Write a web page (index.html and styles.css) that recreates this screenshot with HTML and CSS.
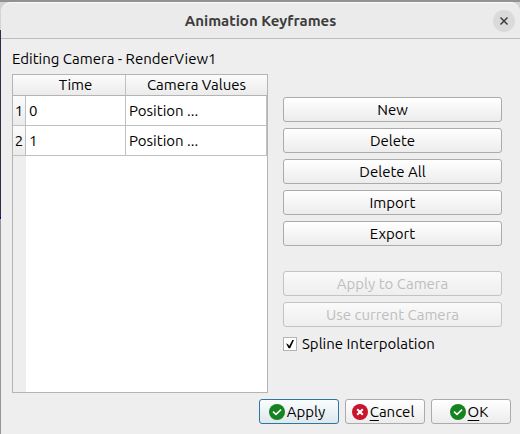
FILE: index.html
```html
<!DOCTYPE html>
<html lang="en">
<head>
<meta charset="utf-8">
<title>Animation Keyframes</title>
<link rel="stylesheet" href="styles.css">
</head>
<body>
<main class="dialog">
  <header class="titlebar">
    <h1>Animation Keyframes</h1>
    <button class="close" type="button" aria-label="Close">
      <svg width="22" height="22" viewBox="0 0 22 22"><path d="M7.5 7.5l7 7M14.5 7.5l-7 7" stroke="#3d3d3d" stroke-width="1.5" fill="none"/></svg>
    </button>
  </header>
  <div class="content">
    <p class="caption">Editing Camera - RenderView1</p>
    <div class="editor">
      <div class="tableview">
        <table>
          <colgroup><col class="col-index"><col class="col-time"><col></colgroup>
          <thead><tr><td></td><th scope="col">Time</th><th scope="col">Camera Values</th></tr></thead>
          <tbody>
            <tr><th scope="row">1</th><td>0</td><td>Position ...</td></tr>
            <tr><th scope="row">2</th><td>1</td><td>Position ...</td></tr>
          </tbody>
        </table>
      </div>
      <div class="side">
        <button class="btn" type="button">New</button>
        <button class="btn" type="button">Delete</button>
        <button class="btn" type="button">Delete All</button>
        <button class="btn" type="button">Import</button>
        <button class="btn" type="button">Export</button>
        <button class="btn camera" type="button" disabled>Apply to Camera</button>
        <button class="btn" type="button" disabled>Use current Camera</button>
        <label class="check"><input type="checkbox" checked><span>Spline Interpolation</span>
          <svg class="tick" width="14" height="14" viewBox="0 0 14 14"><path d="M3 6.2L5.3 7.4 6.2 9 9.4 3H11L7.2 11.2H5.6Z" fill="#000"/></svg>
        </label>
      </div>
    </div>
    <footer class="actions">
      <button class="btn primary" type="button"><svg width="16" height="16" viewBox="0 0 16 16"><circle cx="8" cy="8" r="8" fill="#15831f"/><path d="M4 7.6l3 2.8 5-4.8" fill="none" stroke="#fff" stroke-width="1.5"/></svg><span>Apply</span></button>
      <button class="btn" type="button"><svg width="16" height="16" viewBox="0 0 16 16"><circle cx="8" cy="8" r="8" fill="#c7162b"/><path d="M5.2 5.2l5.6 5.6M10.8 5.2l-5.6 5.6" fill="none" stroke="#fff" stroke-width="2"/></svg><span><u>C</u>ancel</span></button>
      <button class="btn" type="button"><svg width="16" height="16" viewBox="0 0 16 16"><circle cx="8" cy="8" r="8" fill="#15831f"/><path d="M4 7.6l3 2.8 5-4.8" fill="none" stroke="#fff" stroke-width="1.5"/></svg><span><u>O</u>K</span></button>
    </footer>
  </div>
</main>
</body>
</html>
```
FILE: styles.css
```css
* { box-sizing: border-box; }

html { height: 100%; }

body {
  min-height: 100%;
  margin: 0;
  padding: 2px 0 0 1px;
  display: flex;
  background: linear-gradient(#929292 2px, #d4d4d4 2px 30px, #2e3040 30px 217px, #0000c0 217px 219px, #969696 219px);
  font: 15px/20px "Ubuntu", "Noto Sans", sans-serif;
  color: #000;
}

.dialog {
  flex: 1;
  display: flex;
  flex-direction: column;
  background: #eee;
  border-radius: 10px 10px 0 0;
}

.titlebar {
  height: 37px;
  display: grid;
  grid-template-columns: 22px 1fr 22px;
  align-items: center;
  padding: 0 5px;
  background: #ebebeb;
  border-top: 1px solid #fafafa;
  border-bottom: 1px solid #bdbdbd;
  border-radius: 10px 10px 0 0;
}

.titlebar h1 {
  grid-column: 2;
  margin: 0;
  font-size: 15px;
  text-align: center;
  color: #3d3d3d;
}

.close {
  width: 22px;
  height: 22px;
  padding: 0;
  border: 0;
  border-radius: 50%;
  background: #dadada;
}

.close svg { display: block; }

.content {
  flex: 1;
  display: flex;
  flex-direction: column;
  padding: 10px 9px 10px 11px;
}

.caption { margin: 0 0 5px; }

.editor {
  flex: 1;
  display: grid;
  grid-template-columns: 256fr 219fr;
  column-gap: 15px;
  padding-right: 9px;
}

.tableview {
  border: 1px solid #b4b4b4;
  background: linear-gradient(90deg, #eee 13px, #fff 13px);
}

table {
  width: 100%;
  table-layout: fixed;
  border-collapse: separate;
  border-spacing: 0;
}

.col-index { width: 13px; }
.col-time { width: 100px; }

th, td {
  height: 30px;
  padding: 0 3px;
  border-right: 1px solid #c0c0c0;
  border-bottom: 1px solid #c0c0c0;
  font-weight: 400;
  text-align: left;
}

thead th, thead td {
  height: 21px;
  padding: 0;
  background: linear-gradient(#fcfcfc, #ebebeb);
  border-bottom-color: #b4b4b4;
  text-align: center;
}

thead td, thead th:last-child { border-right: 0; }

tbody th {
  padding: 0;
  background: linear-gradient(#fcfcfc, #ebebeb);
  text-align: center;
}

.side {
  display: flex;
  flex-direction: column;
  gap: 6px;
  padding-top: 23px;
}

.btn {
  height: 25px;
  display: flex;
  align-items: center;
  justify-content: center;
  gap: 2px;
  padding: 0;
  border: 1px solid #ababab;
  border-radius: 3px;
  background: linear-gradient(#fff, #ececec);
  font: inherit;
  color: #000;
}

.btn:disabled {
  border-color: #c3c3c3;
  background: linear-gradient(#fafafa, #eee);
  color: #bebebe;
}

.camera { margin-top: 19px; }

.check {
  position: relative;
  display: flex;
  align-items: center;
  gap: 5px;
  margin-top: 1px;
}

.check input {
  appearance: none;
  width: 14px;
  height: 14px;
  margin: 0;
  border: 1px solid #b4b4b4;
  background: #fff;
}

.tick {
  position: absolute;
  left: 0;
  top: 3px;
  visibility: hidden;
  pointer-events: none;
}

.check input:checked ~ .tick { visibility: visible; }

.actions {
  display: flex;
  justify-content: flex-end;
  gap: 6px;
  margin-top: 6px;
}

.actions .btn {
  width: 80px;
  padding-right: 4px;
}

.actions .primary {
  border-color: #2a77a3;
  background: linear-gradient(#fafdff, #dfe7ec);
}

.actions u { text-underline-offset: 3px; }
```
